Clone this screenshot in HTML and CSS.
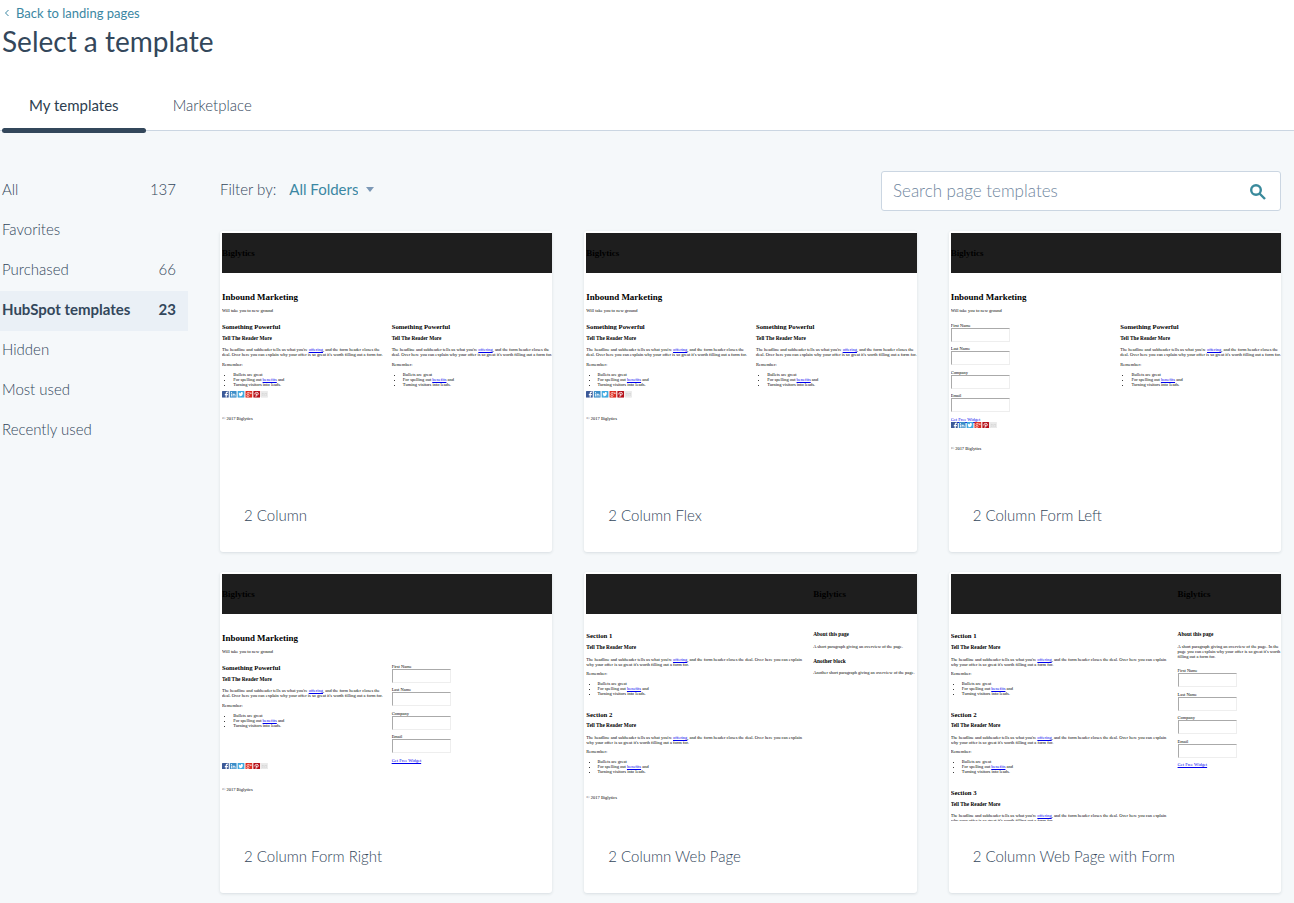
FILE: index.html
```html
<!DOCTYPE html>
<html lang="en">
<head>
<meta charset="utf-8">
<meta name="viewport" content="width=device-width, initial-scale=1">
<title>Select a template</title>
<link rel="stylesheet" href="styles.css">
</head>
<body>
<svg class="sprite" aria-hidden="true">
  <symbol id="share" viewBox="0 0 164 24">
    <rect width="24" height="24" rx="2" fill="#3b5998"/>
    <path d="M17 24v-9h4v-4h-4V8q0-2 4-2V2q-8-1-8 6v3h-3v4h3v9z" fill="#fff"/>
    <rect x="28" width="24" height="24" rx="2" fill="#3c8dc8"/>
    <path d="M32 9h3v11h-3zM32 4h3v3h-3zM38 9h3v2q5-4 7 2v7h-3v-6q-1-4-4 0v6h-3z" fill="#fff"/>
    <rect x="56" width="24" height="24" rx="2" fill="#3fa9e0"/>
    <path d="M76 7l-2 2q0 10-9 10-3 0-5-2 3 0 4-1-3-1-3-3h1q-3-1-2-4h1q-2-2 0-4 3 3 6 3 0-5 4-4l2 1 2-1-1 2z" fill="#fff"/>
    <rect x="84" width="24" height="24" rx="2" fill="#dd2c1f"/>
    <path d="M98 5h-4q-5 0-5 4 0 3 4 3 2 2-1 2-5 1-4 4 1 3 5 2 5-1 4-5l-2-3q3-3 0-6zM100 8h6M103 5v6" fill="none" stroke="#fff" stroke-width="2"/>
    <rect x="112" width="24" height="24" rx="2" fill="#b5121b"/>
    <path d="M121 21l3-12M118 13q-3-7 5-8 8 0 7 5-2 7-7 4" fill="none" stroke="#fff" stroke-width="3"/>
    <rect x="140" y="1" width="23" height="22" rx="2" fill="#eee" stroke="#ccc"/>
    <path d="M144 8h15v9h-15zl7 5 8-5" fill="none" stroke="#bbb"/>
  </symbol>
</svg>

<header class="header">
  <a class="back" href="#"><svg class="back-icon" viewBox="0 0 6 8" aria-hidden="true"><path d="M4.500 1 1.500 4l3 3"/></svg>Back to landing pages</a>
  <h1 class="title">Select a template</h1>
  <nav class="tabs" aria-label="Template source">
    <a class="tab tab-active" href="#" aria-current="page">My templates</a>
    <a class="tab" href="#">Marketplace</a>
  </nav>
</header>

<div class="body">
  <nav class="sidebar" aria-label="Template groups">
    <a class="group" href="#"><span>All</span><span>137</span></a>
    <a class="group" href="#"><span>Favorites</span></a>
    <a class="group" href="#"><span>Purchased</span><span>66</span></a>
    <a class="group group-active" href="#" aria-current="true"><span>HubSpot templates</span><span>23</span></a>
    <a class="group" href="#"><span>Hidden</span></a>
    <a class="group" href="#"><span>Most used</span></a>
    <a class="group" href="#"><span>Recently used</span></a>
  </nav>

  <main class="content">
    <div class="toolbar">
      <div class="filter">
        <label for="folder">Filter by:</label>
        <span class="folder">
          <select class="folder-select" id="folder"><option>All Folders</option></select>
          <svg class="caret" viewBox="0 0 8 5" aria-hidden="true"><path d="M0 0h8L4 5z"/></svg>
        </span>
      </div>
      <div class="search">
        <input class="search-input" type="search" placeholder="Search page templates" aria-label="Search page templates">
        <button class="search-button" type="button" aria-label="Search"><svg class="search-icon" viewBox="0 0 16 16" aria-hidden="true"><circle cx="6" cy="6" r="4.800"/><path d="M9.500 9.500 15 15"/></svg></button>
      </div>
    </div>

    <div class="grid">
      <article class="card">
        <div class="preview"><div class="page">
          <div class="banner"><h1>Biglytics</h1></div>
          <div class="hero"><h1>Inbound Marketing</h1><p>Will take you to new ground</p></div>
          <div class="halves">
            <div class="copy"><h2>Something Powerful</h2><h3>Tell The Reader More</h3><p>The headline and subheader tells us what you're <a href="#">offering</a>, and the form header closes the deal. Over here you can explain why your offer is so great it's worth filling out a form for.</p><p>Remember:</p><ul><li>Bullets are great</li><li>For spelling out <a href="#">benefits</a> and</li><li>Turning visitors into leads.</li></ul></div>
            <div class="copy"><h2>Something Powerful</h2><h3>Tell The Reader More</h3><p>The headline and subheader tells us what you're <a href="#">offering</a>, and the form header closes the deal. Over here you can explain why your offer is so great it's worth filling out a form for.</p><p>Remember:</p><ul><li>Bullets are great</li><li>For spelling out <a href="#">benefits</a> and</li><li>Turning visitors into leads.</li></ul></div>
          </div>
          <svg class="share" role="img" aria-label="Share"><use href="#share"/></svg>
          <p class="copyright">© 2017 Biglytics</p>
        </div></div>
        <h2 class="card-title">2 Column</h2>
      </article>

      <article class="card">
        <div class="preview"><div class="page">
          <div class="banner"><h1>Biglytics</h1></div>
          <div class="hero"><h1>Inbound Marketing</h1><p>Will take you to new ground</p></div>
          <div class="halves">
            <div class="copy"><h2>Something Powerful</h2><h3>Tell The Reader More</h3><p>The headline and subheader tells us what you're <a href="#">offering</a>, and the form header closes the deal. Over here you can explain why your offer is so great it's worth filling out a form for.</p><p>Remember:</p><ul><li>Bullets are great</li><li>For spelling out <a href="#">benefits</a> and</li><li>Turning visitors into leads.</li></ul></div>
            <div class="copy"><h2>Something Powerful</h2><h3>Tell The Reader More</h3><p>The headline and subheader tells us what you're <a href="#">offering</a>, and the form header closes the deal. Over here you can explain why your offer is so great it's worth filling out a form for.</p><p>Remember:</p><ul><li>Bullets are great</li><li>For spelling out <a href="#">benefits</a> and</li><li>Turning visitors into leads.</li></ul></div>
          </div>
          <svg class="share" role="img" aria-label="Share"><use href="#share"/></svg>
          <p class="copyright">© 2017 Biglytics</p>
        </div></div>
        <h2 class="card-title">2 Column Flex</h2>
      </article>

      <article class="card">
        <div class="preview"><div class="page">
          <div class="banner"><h1>Biglytics</h1></div>
          <div class="hero"><h1>Inbound Marketing</h1><p>Will take you to new ground</p></div>
          <div class="halves">
            <form class="form"><label class="field">First Name<input type="text"></label><label class="field">Last Name<input type="text"></label><label class="field">Company<input type="text"></label><label class="field">Email<input type="text"></label><a href="#">Get Free Widget</a></form>
            <div class="copy"><h2>Something Powerful</h2><h3>Tell The Reader More</h3><p>The headline and subheader tells us what you're <a href="#">offering</a>, and the form header closes the deal. Over here you can explain why your offer is so great it's worth filling out a form for.</p><p>Remember:</p><ul><li>Bullets are great</li><li>For spelling out <a href="#">benefits</a> and</li><li>Turning visitors into leads.</li></ul></div>
          </div>
          <svg class="share" role="img" aria-label="Share"><use href="#share"/></svg>
          <p class="copyright">© 2017 Biglytics</p>
        </div></div>
        <h2 class="card-title">2 Column Form Left</h2>
      </article>

      <article class="card">
        <div class="preview"><div class="page">
          <div class="banner"><h1>Biglytics</h1></div>
          <div class="hero"><h1>Inbound Marketing</h1><p>Will take you to new ground</p></div>
          <div class="halves">
            <div class="copy"><h2>Something Powerful</h2><h3>Tell The Reader More</h3><p>The headline and subheader tells us what you're <a href="#">offering</a>, and the form header closes the deal. Over here you can explain why your offer is so great it's worth filling out a form for.</p><p>Remember:</p><ul><li>Bullets are great</li><li>For spelling out <a href="#">benefits</a> and</li><li>Turning visitors into leads.</li></ul></div>
            <form class="form"><label class="field">First Name<input type="text"></label><label class="field">Last Name<input type="text"></label><label class="field">Company<input type="text"></label><label class="field">Email<input type="text"></label><a href="#">Get Free Widget</a></form>
          </div>
          <svg class="share" role="img" aria-label="Share"><use href="#share"/></svg>
          <p class="copyright">© 2017 Biglytics</p>
        </div></div>
        <h2 class="card-title">2 Column Form Right</h2>
      </article>

      <article class="card">
        <div class="preview"><div class="page">
          <div class="banner thirds"><h1 class="banner-right">Biglytics</h1></div>
          <div class="thirds main">
            <div class="sections">
              <div class="copy"><h2>Section 1</h2><h3>Tell The Reader More</h3><p>The headline and subheader tells us what you're <a href="#">offering</a>, and the form header closes the deal. Over here you can explain why your offer is so great it's worth filling out a form for.</p><p>Remember:</p><ul><li>Bullets are great</li><li>For spelling out <a href="#">benefits</a> and</li><li>Turning visitors into leads.</li></ul></div>
              <div class="copy"><h2>Section 2</h2><h3>Tell The Reader More</h3><p>The headline and subheader tells us what you're <a href="#">offering</a>, and the form header closes the deal. Over here you can explain why your offer is so great it's worth filling out a form for.</p><p>Remember:</p><ul><li>Bullets are great</li><li>For spelling out <a href="#">benefits</a> and</li><li>Turning visitors into leads.</li></ul></div>
            </div>
            <div class="aside"><h3>About this page</h3><p>A short paragraph giving an overview of the page.</p><h3 class="block">Another block</h3><p>Another short paragraph giving an overview of the page.</p></div>
          </div>
          <p class="copyright">© 2017 Biglytics</p>
        </div></div>
        <h2 class="card-title">2 Column Web Page</h2>
      </article>

      <article class="card">
        <div class="preview"><div class="page">
          <div class="banner thirds"><h1 class="banner-right">Biglytics</h1></div>
          <div class="thirds main">
            <div class="sections">
              <div class="copy"><h2>Section 1</h2><h3>Tell The Reader More</h3><p>The headline and subheader tells us what you're <a href="#">offering</a>, and the form header closes the deal. Over here you can explain why your offer is so great it's worth filling out a form for.</p><p>Remember:</p><ul><li>Bullets are great</li><li>For spelling out <a href="#">benefits</a> and</li><li>Turning visitors into leads.</li></ul></div>
              <div class="copy"><h2>Section 2</h2><h3>Tell The Reader More</h3><p>The headline and subheader tells us what you're <a href="#">offering</a>, and the form header closes the deal. Over here you can explain why your offer is so great it's worth filling out a form for.</p><p>Remember:</p><ul><li>Bullets are great</li><li>For spelling out <a href="#">benefits</a> and</li><li>Turning visitors into leads.</li></ul></div>
              <div class="copy"><h2>Section 3</h2><h3>Tell The Reader More</h3><p>The headline and subheader tells us what you're <a href="#">offering</a>, and the form header closes the deal. Over here you can explain why your offer is so great it's worth filling out a form for.</p></div>
            </div>
            <div class="aside"><h3>About this page</h3><p>A short paragraph giving an overview of the page. In the page you can explain why your offer is so great it's worth filling out a form for.</p>
              <form class="form"><label class="field">First Name<input type="text"></label><label class="field">Last Name<input type="text"></label><label class="field">Company<input type="text"></label><label class="field">Email<input type="text"></label><a href="#">Get Free Widget</a></form>
            </div>
          </div>
        </div></div>
        <h2 class="card-title">2 Column Web Page with Form</h2>
      </article>
    </div>
  </main>
</div>
</body>
</html>
```
FILE: styles.css
```css
* { box-sizing: border-box; }

body {
  margin: 0;
  background: #f5f8fa;
  color: #33475b;
  font: 300 15px/24px Lato, "Open Sans", sans-serif;
}

a { color: inherit; text-decoration: none; }

.sprite { display: none; }

/* Header and tabs */
.header {
  padding: 4px 0 0 2px;
  background: #fff;
}

.back {
  display: flex;
  align-items: center;
  gap: 6px;
  padding-left: 2px;
  color: #3b87a3;
  font-size: 13px;
  font-weight: 400;
  line-height: 18px;
}

.back-icon {
  width: 6px;
  height: 8px;
  fill: none;
  stroke: #3b87a3;
}

.title {
  margin: 0;
  font-size: 28px;
  font-weight: 400;
  line-height: 38px;
}

.tabs {
  display: flex;
  margin: 20px 0 0 -2px;
  padding-left: 2px;
  border-bottom: 1px solid #cbd6e2;
}

.tab {
  position: relative;
  padding: 13px 27px;
}

.tab-active { color: #2d3e50; font-weight: 400; }

.tab-active::after {
  content: "";
  position: absolute;
  right: 0;
  bottom: -3px;
  left: 0;
  height: 5px;
  border-radius: 3px;
  background: #33475b;
}

/* Body columns */
.body {
  display: flex;
  gap: 32px;
  padding: 40px 13px 10px 0;
}

.sidebar { flex: 0 0 188px; }

.group {
  display: flex;
  justify-content: space-between;
  padding: 6px 12px 10px 2px;
}

.group-active {
  background: #eaf0f6;
  font-weight: 700;
}

.content { flex: 1; min-width: 0; }

.toolbar {
  display: flex;
  justify-content: space-between;
  margin-bottom: 20px;
}

.filter {
  display: flex;
  gap: 13px;
  padding: 6px 0 10px;
}

.folder {
  display: flex;
  align-items: center;
  gap: 8px;
}

.folder-select {
  appearance: none;
  field-sizing: content;
  padding: 0;
  border: 0;
  background: none;
  color: #3b87a3;
  font: inherit;
  font-weight: 400;
}

.caret { width: 8px; height: 5px; fill: #7c98b6; }

.search {
  display: flex;
  align-items: center;
  flex: 0 1 400px;
  height: 40px;
  border: 1px solid #cbd6e2;
  border-radius: 3px;
  background: #fff;
}

.search-input {
  flex: 1;
  min-width: 0;
  padding: 0 0 0 11px;
  border: 0;
  background: none;
  color: #33475b;
  font: inherit;
  font-size: 17px;
}

.search-input::placeholder { color: #6f869e; }

.search-button {
  display: flex;
  padding: 12px 14px 10px;
  border: 0;
  background: none;
}

.search-icon {
  width: 16px;
  height: 16px;
  fill: none;
  stroke: #3a8a9c;
  stroke-width: 2.4;
}

/* Template cards */
.grid {
  display: grid;
  grid-template-columns: repeat(3, minmax(0, 1fr));
  gap: 20px 32px;
}

.card {
  padding: 2px 0 0 2px;
  border-radius: 3px;
  background: #fff;
  box-shadow: 0 1px 3px rgba(45, 62, 80, 0.14);
}

.card-title {
  margin: 0;
  padding: 23px 22px 25px;
  font-size: 15px;
  font-weight: 300;
  line-height: 24px;
}

/* Miniature of each template, a full-size page shown at 28% */
.preview {
  height: 247px;
  overflow: hidden;
}

.page {
  zoom: 28%;
  color: #000;
  font: 16px/18px "Liberation Serif", serif;
}

.page a { color: #00e; text-decoration: underline; }
.page h1 { margin: 0; font-size: 32px; line-height: 37px; }
.page h2 { margin: 0; font-size: 24px; line-height: 27px; }
.page h3 { margin: 19px 0; font-size: 19px; line-height: 21px; }
.page p { margin: 0 0 16px; }
.page ul { margin: 0 0 16px; padding-left: 40px; }

.banner { padding: 53px 0; background: #1e1e1e; }
.hero { padding: 67px 0 18px; }
.page .hero h1 { margin-bottom: 21px; }

.halves {
  display: grid;
  grid-template-columns: 1fr 1fr;
  gap: 32px;
}

.halves .copy { padding-top: 3px; }

.thirds {
  display: grid;
  grid-template-columns: 782fr 371fr;
  gap: 32px;
}

.banner-right { grid-column: 2; }
.main { padding-top: 66px; }
.sections .copy { padding-bottom: 37px; }
.page .aside h3:first-child { margin-top: 0; }
.page .block { margin-top: 35px; }

.field { display: block; margin-bottom: 16px; }

.field input {
  display: block;
  width: 213px;
  height: 50px;
  border: 4px solid;
  border-color: #aaa #eee #eee #aaa;
  background: #fff;
}

.aside .form { padding-top: 17px; }

.share { display: block; width: 164px; height: 24px; }

.page .copyright { margin-top: 64px; }
.page .main + .copyright { margin-top: 24px; }
```
